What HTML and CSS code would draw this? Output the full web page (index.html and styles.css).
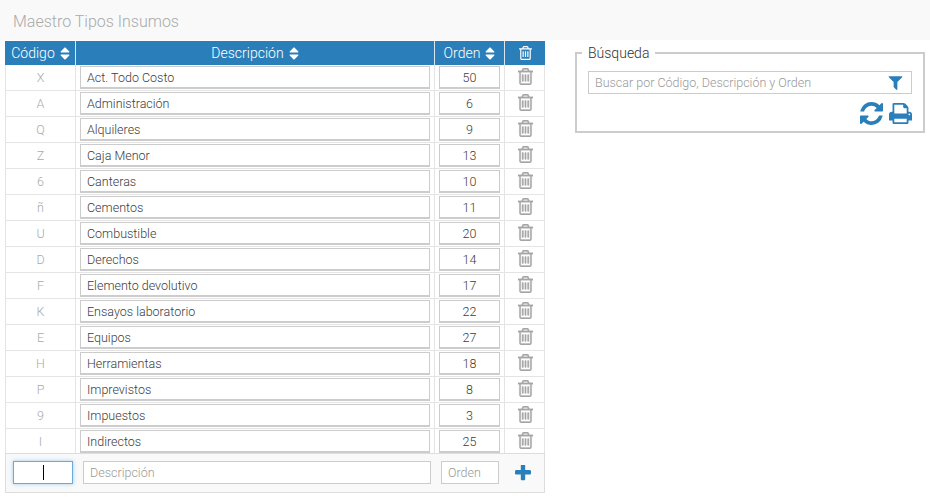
FILE: index.html
```html
<!DOCTYPE html>
<html lang="es">
<head>
  <meta charset="UTF-8" />
  <title>Maestro Tipos Insumos</title>
  <link rel="stylesheet" href="styles.css">
</head>
<body>

  <svg class="icon-defs" aria-hidden="true">
    <symbol id="i-sort" viewBox="320 192 1152 1408"><path d="M1408 1088q0 26-19 45l-448 448q-19 19-45 19t-45-19l-448-448q-19-19-19-45t19-45 45-19h896q26 0 45 19t19 45zm0-384q0 26-19 45t-45 19h-896q-26 0-45-19t-19-45 19-45l448-448q19-19 45-19t45 19l448 448q19 19 19 45z"/></symbol>
    <symbol id="i-trash" viewBox="192 128 1408 1536" preserveAspectRatio="none"><path d="M704 736v576q0 14-9 23t-23 9h-64q-14 0-23-9t-9-23v-576q0-14 9-23t23-9h64q14 0 23 9t9 23zm256 0v576q0 14-9 23t-23 9h-64q-14 0-23-9t-9-23v-576q0-14 9-23t23-9h64q14 0 23 9t9 23zm256 0v576q0 14-9 23t-23 9h-64q-14 0-23-9t-9-23v-576q0-14 9-23t23-9h64q14 0 23 9t9 23zm128 724v-948h-896v948q0 22 7 40.500t14.500 27 10.500 8.500h832q3 0 10.500-8.500t14.500-27 7-40.500zm-672-1076h448l-48-117q-7-9-17-11h-317q-10 2-17 11zm928 32v64q0 14-9 23t-23 9h-96v948q0 83-47 143.500t-113 60.500h-832q-66 0-113-58.500t-47-141.500v-952h-96q-14 0-23-9t-9-23v-64q0-14 9-23t23-9h309l70-167q15-37 54-63t79-26h320q40 0 79 26t54 63l70 167h309q14 0 23 9t9 23z"/></symbol>
    <symbol id="i-filter" viewBox="128 256 1536 1408"><path d="M1595 295q17 41-14 70l-493 493v742q0 42-39 59-13 5-25 5-27 0-45-19l-256-256q-19-19-19-45v-486l-493-493q-31-29-14-70 17-39 59-39h1280q42 0 59 39z"/></symbol>
    <symbol id="i-refresh" viewBox="128 128 1536 1536"><path d="M1639 1056q0 5-1 7-64 268-268 434.500t-478 166.500q-146 0-282.500-55t-243.500-157l-129 129q-19 19-45 19t-45-19-19-45v-448q0-26 19-45t45-19h448q26 0 45 19t19 45-19 45l-137 137q71 66 161 102t187 36q134 0 250-65t186-179q11-17 53-117 8-23 30-23h192q13 0 22.500 9.500t9.500 22.500zm25-800v448q0 26-19 45t-45 19h-448q-26 0-45-19t-19-45 19-45l138-138q-148-137-349-137-134 0-250 65t-186 179q-11 17-53 117-8 23-30 23h-199q-13 0-22.500-9.500t-9.500-22.500v-7q65-268 270-434.500t480-166.500q146 0 284 55.500t245 156.500l130-129q19-19 45-19t45 19 19 45z"/></symbol>
    <symbol id="i-print" viewBox="64 128 1664 1536"><path d="M448 1536h896v-256h-896v256zm0-640h896v-384h-160q-40 0-68-28t-28-68v-160h-640v640zm1152 64q0-26-19-45t-45-19-45 19-19 45 19 45 45 19 45-19 19-45zm128 0v416q0 13-9.500 22.500t-22.500 9.500h-224v160q0 40-28 68t-68 28h-960q-40 0-68-28t-28-68v-160h-224q-13 0-22.500-9.500t-9.500-22.500v-416q0-79 56.500-135.500t135.500-56.500h64v-544q0-40 28-68t68-28h672q40 0 88 20t76 48l152 152q28 28 48 76t20 88v256h64q79 0 135.500 56.500t56.500 135.500z"/></symbol>
    <symbol id="i-plus" viewBox="192 192 1408 1408"><path d="M1600 736v192q0 40-28 68t-68 28h-416v416q0 40-28 68t-68 28h-192q-40 0-68-28t-28-68v-416h-416q-40 0-68-28t-28-68v-192q0-40 28-68t68-28h416v-416q0-40 28-68t68-28h192q40 0 68 28t28 68v416h416q40 0 68 28t28 68z"/></symbol>
  </svg>

  <!-- TITULO -->
  <header class="page-title">Maestro Tipos Insumos</header>

  <main class="page">

    <!-- TABLA -->
    <section class="grid">
      <div class="grid-head">
        <div class="col-code">Código <svg class="ic-sort"><use href="#i-sort"/></svg></div>
        <div class="col-desc">Descripción <svg class="ic-sort"><use href="#i-sort"/></svg></div>
        <div class="col-order">Orden <svg class="ic-sort"><use href="#i-sort"/></svg></div>
        <div class="col-del"><svg class="ic-trash-head"><use href="#i-trash"/></svg></div>
      </div>

      <div class="grid-row">
        <div class="col-code">X</div>
        <div class="col-desc"><input class="field" value="Act. Todo Costo"></div>
        <div class="col-order"><input class="field num" value="50"></div>
        <div class="col-del"><svg class="ic-trash"><use href="#i-trash"/></svg></div>
      </div>
      <div class="grid-row">
        <div class="col-code">A</div>
        <div class="col-desc"><input class="field" value="Administración"></div>
        <div class="col-order"><input class="field num" value="6"></div>
        <div class="col-del"><svg class="ic-trash"><use href="#i-trash"/></svg></div>
      </div>
      <div class="grid-row">
        <div class="col-code">Q</div>
        <div class="col-desc"><input class="field" value="Alquileres"></div>
        <div class="col-order"><input class="field num" value="9"></div>
        <div class="col-del"><svg class="ic-trash"><use href="#i-trash"/></svg></div>
      </div>
      <div class="grid-row">
        <div class="col-code">Z</div>
        <div class="col-desc"><input class="field" value="Caja Menor"></div>
        <div class="col-order"><input class="field num" value="13"></div>
        <div class="col-del"><svg class="ic-trash"><use href="#i-trash"/></svg></div>
      </div>
      <div class="grid-row">
        <div class="col-code">6</div>
        <div class="col-desc"><input class="field" value="Canteras"></div>
        <div class="col-order"><input class="field num" value="10"></div>
        <div class="col-del"><svg class="ic-trash"><use href="#i-trash"/></svg></div>
      </div>
      <div class="grid-row">
        <div class="col-code">ñ</div>
        <div class="col-desc"><input class="field" value="Cementos"></div>
        <div class="col-order"><input class="field num" value="11"></div>
        <div class="col-del"><svg class="ic-trash"><use href="#i-trash"/></svg></div>
      </div>
      <div class="grid-row">
        <div class="col-code">U</div>
        <div class="col-desc"><input class="field" value="Combustible"></div>
        <div class="col-order"><input class="field num" value="20"></div>
        <div class="col-del"><svg class="ic-trash"><use href="#i-trash"/></svg></div>
      </div>
      <div class="grid-row">
        <div class="col-code">D</div>
        <div class="col-desc"><input class="field" value="Derechos"></div>
        <div class="col-order"><input class="field num" value="14"></div>
        <div class="col-del"><svg class="ic-trash"><use href="#i-trash"/></svg></div>
      </div>
      <div class="grid-row">
        <div class="col-code">F</div>
        <div class="col-desc"><input class="field" value="Elemento devolutivo"></div>
        <div class="col-order"><input class="field num" value="17"></div>
        <div class="col-del"><svg class="ic-trash"><use href="#i-trash"/></svg></div>
      </div>
      <div class="grid-row">
        <div class="col-code">K</div>
        <div class="col-desc"><input class="field" value="Ensayos laboratorio"></div>
        <div class="col-order"><input class="field num" value="22"></div>
        <div class="col-del"><svg class="ic-trash"><use href="#i-trash"/></svg></div>
      </div>
      <div class="grid-row">
        <div class="col-code">E</div>
        <div class="col-desc"><input class="field" value="Equipos"></div>
        <div class="col-order"><input class="field num" value="27"></div>
        <div class="col-del"><svg class="ic-trash"><use href="#i-trash"/></svg></div>
      </div>
      <div class="grid-row">
        <div class="col-code">H</div>
        <div class="col-desc"><input class="field" value="Herramientas"></div>
        <div class="col-order"><input class="field num" value="18"></div>
        <div class="col-del"><svg class="ic-trash"><use href="#i-trash"/></svg></div>
      </div>
      <div class="grid-row">
        <div class="col-code">P</div>
        <div class="col-desc"><input class="field" value="Imprevistos"></div>
        <div class="col-order"><input class="field num" value="8"></div>
        <div class="col-del"><svg class="ic-trash"><use href="#i-trash"/></svg></div>
      </div>
      <div class="grid-row">
        <div class="col-code">9</div>
        <div class="col-desc"><input class="field" value="Impuestos"></div>
        <div class="col-order"><input class="field num" value="3"></div>
        <div class="col-del"><svg class="ic-trash"><use href="#i-trash"/></svg></div>
      </div>
      <div class="grid-row">
        <div class="col-code">I</div>
        <div class="col-desc"><input class="field" value="Indirectos"></div>
        <div class="col-order"><input class="field num" value="25"></div>
        <div class="col-del"><svg class="ic-trash"><use href="#i-trash"/></svg></div>
      </div>

      <!-- NUEVO REGISTRO -->
      <div class="grid-new">
        <div class="new-code"><input class="new-field is-focus"><span class="caret"></span></div>
        <input class="new-field new-desc" placeholder="Descripción">
        <input class="new-field new-order" placeholder="Orden">
        <svg class="ic-plus"><use href="#i-plus"/></svg>
      </div>
    </section>

    <!-- BUSQUEDA -->
    <fieldset class="search">
      <legend>Búsqueda</legend>
      <div class="search-box">
        <input class="search-input" placeholder="Buscar por Código, Descripción y Orden">
        <svg class="ic-filter"><use href="#i-filter"/></svg>
      </div>
      <div class="search-tools">
        <svg class="ic-tool"><use href="#i-refresh"/></svg>
        <svg class="ic-tool"><use href="#i-print"/></svg>
      </div>
    </fieldset>

  </main>

</body>
</html>
```

FILE: styles.css
```css
/* ===== Reset ===== */
*, *::before, *::after { margin:0; padding:0; box-sizing:border-box; }
body {
  font-family:Roboto, "Liberation Sans", sans-serif;
  font-weight:300; font-size:12.5px;
  background:#fff; color:#3c3c3c;
  overflow:hidden;
}
input { font:inherit; color:inherit; outline:none; }
input::placeholder { color:#999; opacity:1; }
svg { display:block; fill:currentColor; }
.icon-defs { display:none; }

/* ===== Title ===== */
.page-title {
  height:40px; padding:13px 13px 0;
  background:#f9f9f9; color:#aaa;
  font-size:16px; line-height:18px;
}

/* ===== Layout ===== */
.page { display:flex; align-items:flex-start; padding:1px 5px 0; }

/* ===== Grid ===== */
.grid { width:540px; flex:none; }
.grid-head, .grid-row { display:grid; grid-template-columns:70px 359px 70px 41px; }
.grid-head {
  height:24px;
  background:#2a7fba; color:#fff;
  font-size:14px;
}
.grid-head > div {
  display:flex; align-items:center; justify-content:center; gap:5px;
  border-left:1px solid #d8e6f0;
}
.grid-head > div:first-child { border-left:0; padding-left:1px; }
.ic-sort { width:10px; height:13px; }
.ic-trash-head { width:13px; height:14px; }

.grid-row { height:26px; border-bottom:1px solid #e4e4e4; }
.grid-row > div {
  display:flex; align-items:flex-start; justify-content:center;
  padding-top:1px;
  border-left:1px solid #e4e4e4;
}
.grid-row > div:last-child { border-right:1px solid #e4e4e4; padding:3px 0 0 1px; }
.grid-row .col-code { color:#aaa; align-items:center; padding-top:0; }
.grid-row .col-desc { padding-left:4px; padding-right:4px; }
.grid-row .col-order { padding-left:4px; padding-right:4px; }

.field {
  width:100%; height:23px; padding:0 6px;
  border:1px solid #ccc; border-bottom-width:2px; background:#fff;
}
.field.num { text-align:center; }
.ic-trash { width:15px; height:17px; color:#a6a6a6; stroke:#a6a6a6; stroke-width:30; }

/* ===== New row ===== */
.grid-new {
  position:relative;
  display:flex; align-items:center;
  height:40px; padding:0 7px 1px;
  background:#f9f9f9;
  border:1px solid #ddd; margin-top:-2px;
}
.new-code { position:relative; flex:none; }
.new-field { height:23px; border:1px solid #ccc; background:#fff; padding:0 6px; display:block; }
.new-field.is-focus {
  width:60px;
  border-color:#6aa9dc;
  box-shadow:0 0 4px rgba(102,175,233,.6);
}
.caret {
  position:absolute; left:30px; top:4px;
  width:1px; height:15px; background:#000;
}
.new-desc { width:348px; margin-left:10px; }
.new-order { width:58px; margin-left:10px; }
.ic-plus { width:16px; height:16px; color:#2a7fba; margin-left:16px; }

/* ===== Search ===== */
.search {
  width:350px; height:88px; margin:4px 0 0 30px; padding:0 11px;
  border:2px solid #ccc; min-width:0;
}
.search legend { margin-left:-6px; padding:0 6px; color:#333; font-size:14px; line-height:16px; }
.search-box { position:relative; margin-top:10px; }
.search-input {
  display:block; width:100%; height:23px; padding:0 6px;
  border:1px solid #ccc; background:#fff;
}
.ic-filter {
  position:absolute; right:9px; top:5px;
  width:15px; height:14px; color:#2a7fba;
}
.search-tools { display:flex; justify-content:flex-end; gap:6px; margin-top:8px; }
.ic-tool { width:23px; height:23px; color:#2a7fba; }
```
